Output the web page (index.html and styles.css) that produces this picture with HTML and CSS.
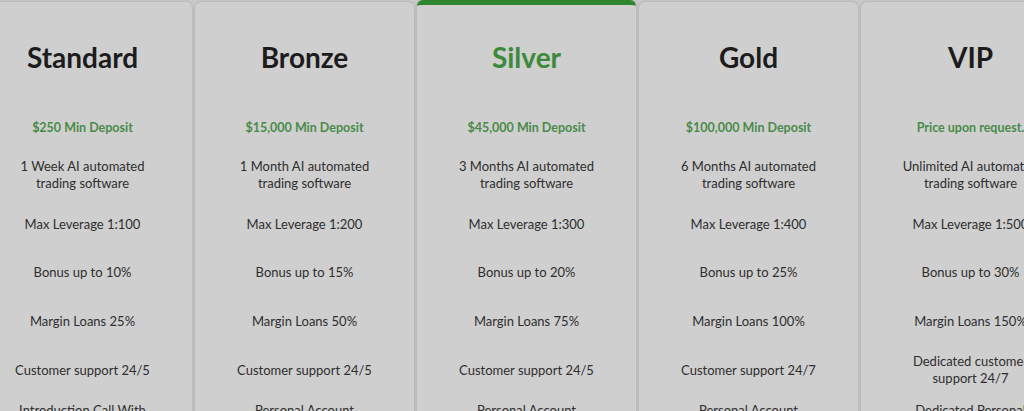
FILE: index.html
```html
<!DOCTYPE html>
<html lang="en">
<head>
  <meta charset="UTF-8">
  <meta name="viewport" content="width=device-width, initial-scale=1.0">
  <title>Account Types</title>
  <link rel="stylesheet" href="styles.css">
</head>
<body>
  <div class="plans">

    <!-- Standard -->
    <div class="plan">
      <h2 class="plan-name">Standard</h2>
      <ul class="features">
        <li class="price">$250 Min Deposit</li>
        <li>1 Week AI automated<br>trading software</li>
        <li>Max Leverage 1:100</li>
        <li>Bonus up to 10%</li>
        <li>Margin Loans 25%</li>
        <li>Customer support 24/5</li>
        <li>Introduction Call With<br>Account Manager</li>
      </ul>
    </div>

    <!-- Bronze -->
    <div class="plan">
      <h2 class="plan-name">Bronze</h2>
      <ul class="features">
        <li class="price">$15,000 Min Deposit</li>
        <li>1 Month AI automated<br>trading software</li>
        <li>Max Leverage 1:200</li>
        <li>Bonus up to 15%</li>
        <li>Margin Loans 50%</li>
        <li>Customer support 24/5</li>
        <li>Personal Account<br>Manager</li>
      </ul>
    </div>

    <!-- Silver (featured) -->
    <div class="plan featured">
      <h2 class="plan-name">Silver</h2>
      <ul class="features">
        <li class="price">$45,000 Min Deposit</li>
        <li>3 Months AI automated<br>trading software</li>
        <li>Max Leverage 1:300</li>
        <li>Bonus up to 20%</li>
        <li>Margin Loans 75%</li>
        <li>Customer support 24/5</li>
        <li>Personal Account<br>Manager</li>
      </ul>
    </div>

    <!-- Gold -->
    <div class="plan">
      <h2 class="plan-name">Gold</h2>
      <ul class="features">
        <li class="price">$100,000 Min Deposit</li>
        <li>6 Months AI automated<br>trading software</li>
        <li>Max Leverage 1:400</li>
        <li>Bonus up to 25%</li>
        <li>Margin Loans 100%</li>
        <li>Customer support 24/7</li>
        <li>Personal Account<br>Manager</li>
      </ul>
    </div>

    <!-- VIP -->
    <div class="plan">
      <h2 class="plan-name">VIP</h2>
      <ul class="features">
        <li class="price">Price upon request.</li>
        <li>Unlimited AI automated<br>trading software</li>
        <li>Max Leverage 1:500</li>
        <li>Bonus up to 30%</li>
        <li>Margin Loans 150%</li>
        <li>Dedicated customer<br>support 24/7</li>
        <li>Dedicated Personal<br>Account Manager</li>
      </ul>
    </div>

  </div>
</body>
</html>
```

FILE: styles.css
```css
body {
  font-family: Lato, "Open Sans", sans-serif;
  background-color: #c9c9c9;
  color: #2e2e2e;
  margin: 0;
  overflow: hidden;
  height: 411px;
}
.plans {
  display: flex;
  gap: 3px;
  margin-left: -27px;
  padding-top: 2px;
}
.plan {
  flex: 0 0 219px;
  background: #cfcfcf;
  border-radius: 6px 6px 0 0;
  box-shadow: 0 0 3px rgba(0, 0, 0, 0.18);
  text-align: center;
  height: 480px;
}
.plan.featured {
  margin-top: -2px;
  border-top: 5px solid #2f862f;
  height: 477px;
}
.plan-name {
  margin: 0;
  padding-top: 38px;
  height: 63px;
  font-size: 28px;
  font-weight: 700;
  color: #1c1c1c;
}
.featured .plan-name {
  padding-top: 35px;
  color: #3b8a3b;
}
.features {
  list-style: none;
  margin: 0;
  padding: 0;
}
.features li {
  height: 48.7px;
  display: flex;
  align-items: center;
  justify-content: center;
  font-size: 13px;
  line-height: 17px;
}
.features .price {
  height: 48px;
  color: #4a8b4a;
  font-weight: 700;
  font-size: 12.5px;
}
```
